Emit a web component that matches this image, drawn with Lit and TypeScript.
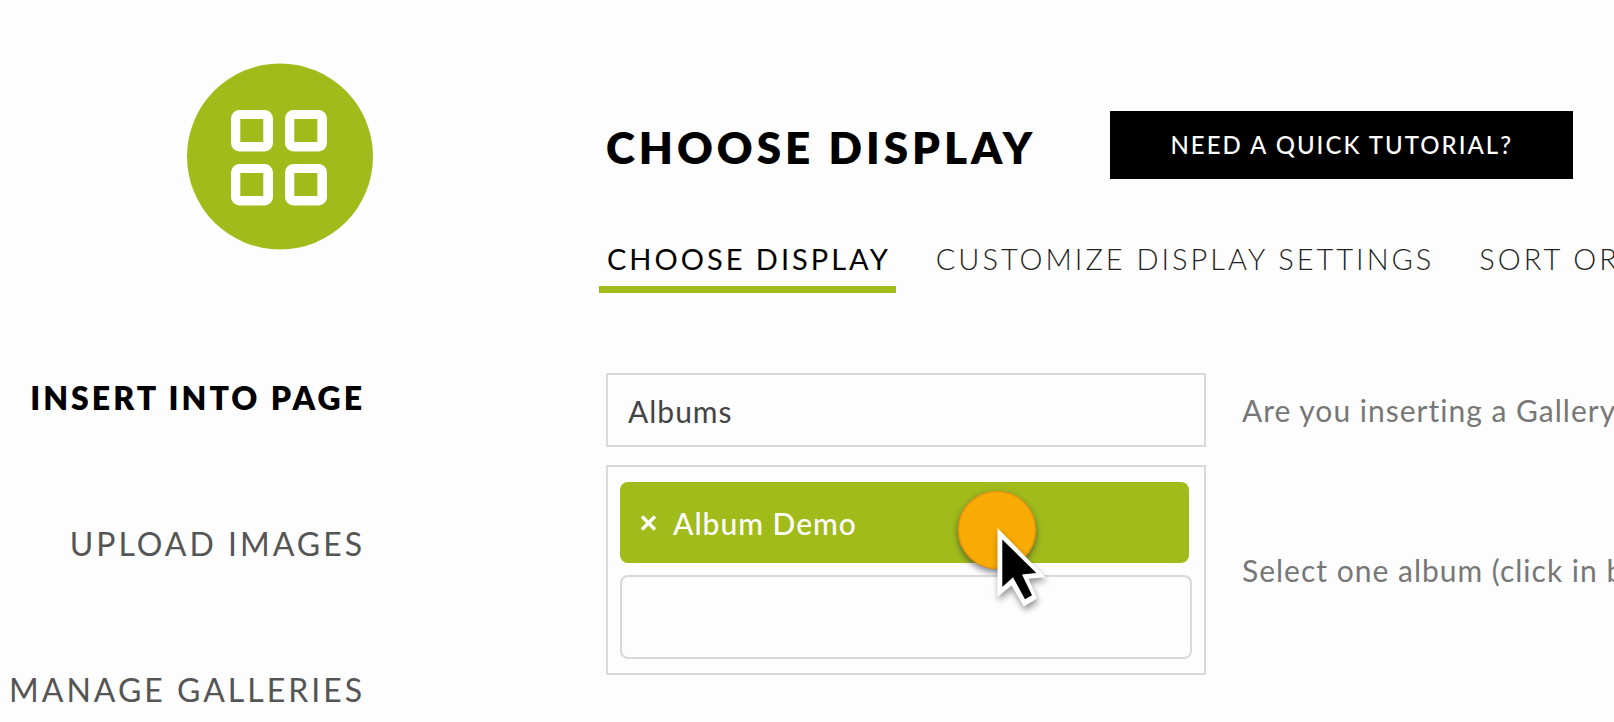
import { LitElement, html, css, svg } from "lit";
import { customElement, state } from "lit/decorators.js";

interface NavItem {
  label: string;
  current?: boolean;
}

@customElement("app-logo")
class AppLogo extends LitElement {
  static styles = css`
    :host { display: block; }
    svg { display: block; }
  `;

  render() {
    const tiles = [[44, 47], [98, 47], [44, 101], [98, 101]];
    return html`
      <svg width="186" height="187" viewBox="0 0 186 187" role="img" aria-label="Gallery">
        <circle cx="93" cy="93.5" r="93" fill="#a0bb1a"></circle>
        ${tiles.map(([x, y]) => svg`
          <rect x=${x} y=${y} width="42" height="41.5" rx="8.5" fill="#fff"></rect>
          <rect x=${x + 9.3} y=${y + 9} width="23" height="23" fill="#a0bb1a"></rect>
        `)}
      </svg>
    `;
  }
}

@customElement("click-pointer")
class ClickPointer extends LitElement {
  static styles = css`
    :host { display: block; pointer-events: none; }
    svg { display: block; overflow: visible; }
    .dot { filter: drop-shadow(0 3px 3px rgba(40, 40, 60, 0.6)); }
    .arrow { filter: drop-shadow(1px 4px 3px rgba(0, 0, 0, 0.4)); }
  `;

  render() {
    return html`
      <svg width="90" height="120" viewBox="0 0 90 120" aria-hidden="true">
        <circle class="dot" cx="40" cy="40" r="38.5" fill="#f8ab05" stroke="#e6960f" stroke-width="1.5"></circle>
        <g class="arrow">
          <path d="M40.5 38 L40.5 107 L54.5 95.5 L66.8 116.5 L80 108.5 L71.5 88.8 L88.5 87 Z" fill="#fff"></path>
          <path d="M45.3 49.5 L45.3 97 L56 87.2 L68 109.3 L75 105.3 L65 84.6 L79.3 83 Z" fill="#000"></path>
        </g>
      </svg>
    `;
  }
}

@customElement("app-root")
class AppRoot extends LitElement {
  @state() private tags: string[] = ["Album Demo"];

  private nav: NavItem[] = [
    { label: "INSERT INTO PAGE", current: true },
    { label: "UPLOAD IMAGES" },
    { label: "MANAGE GALLERIES" },
  ];

  private tabs: NavItem[] = [
    { label: "CHOOSE DISPLAY", current: true },
    { label: "CUSTOMIZE DISPLAY SETTINGS" },
    { label: "SORT OR" },
  ];

  static styles = css`
    :host {
      display: block;
      min-height: 100vh;
      overflow: hidden;
      background: #fdfdfd;
      color: #444;
      font-family: Lato, "Open Sans", sans-serif;
      font-size: 30px;
      line-height: 40px;
    }
    *, *::before, *::after { box-sizing: border-box; }
    a { color: inherit; text-decoration: none; white-space: nowrap; }
    .page {
      display: grid;
      grid-template-columns: 373px minmax(0, 1fr);
      column-gap: 226px;
      height: 100vh;
      overflow: hidden;
    }
    .side {
      display: flex;
      flex-direction: column;
      align-items: flex-end;
      gap: 128px;
      padding-top: 63px;
    }
    .menu {
      display: flex;
      flex-direction: column;
      align-items: flex-end;
      gap: 106px;
      padding-right: 8px;
      font-size: 32px;
      letter-spacing: 3px;
    }
    .menu a { color: #555; }
    .menu a.current { color: #000; font-weight: 800; }
    .main { min-width: 0; }
    .head {
      display: flex;
      align-items: center;
      padding: 111px 41px 0 7px;
    }
    h1 {
      flex: 1;
      margin: 0;
      padding-top: 4px;
      color: #000;
      font-size: 44px;
      font-weight: 800;
      line-height: 64px;
      letter-spacing: 4px;
      white-space: nowrap;
    }
    .tutorial {
      height: 68px;
      padding: 0 60px;
      border: 0;
      background: #000;
      color: #fff;
      font: 500 24px/32px Lato, sans-serif;
      letter-spacing: 2px;
      white-space: nowrap;
      cursor: pointer;
    }
    .tabs {
      display: flex;
      gap: 32px;
      padding-top: 59px;
      font-size: 29px;
      letter-spacing: 3px;
    }
    .tabs a {
      flex: none;
      padding: 0 5px 6px 8px;
      border-bottom: 7px solid transparent;
      line-height: 42px;
      color: #222;
      font-weight: 300;
    }
    .tabs a.current { border-color: #a0bb1a; color: #000; font-weight: 400; }
    .form {
      display: grid;
      grid-template-columns: minmax(0, 600px) minmax(0, 1fr);
      gap: 18px 36px;
      align-items: center;
      padding: 80px 0 0 7px;
      letter-spacing: 1px;
    }
    .hint { color: #777; white-space: nowrap; overflow: hidden; }
    select, input {
      display: block;
      width: 100%;
      margin: 0;
      border: 2px solid #d9d9d9;
      background: #fdfdfd;
      color: #444;
      font: inherit;
      letter-spacing: inherit;
      appearance: none;
      outline: none;
    }
    select { height: 74px; padding: 2px 20px 0; border-radius: 0; }
    .picker {
      position: relative;
      display: flex;
      flex-direction: column;
      gap: 12px;
      padding: 15px 12px 14px;
      border: 2px solid #d9d9d9;
    }
    .tag {
      display: flex;
      align-items: center;
      gap: 16px;
      height: 81px;
      margin-right: 3px;
      padding: 0 20px;
      border-radius: 8px;
      background: #a0bb1a;
      color: #fff;
      font-weight: 500;
    }
    .remove {
      display: block;
      padding: 0;
      border: 0;
      background: none;
      color: inherit;
      cursor: pointer;
    }
    .remove svg { display: block; }
    .picker input { height: 84px; padding: 0 20px; border-radius: 8px; }
    click-pointer { position: absolute; top: 23px; right: 157px; }
  `;

  private link(item: NavItem) {
    return html`<a href="#" class=${item.current ? "current" : ""}
      aria-current=${item.current ? "page" : "false"}>${item.label}</a>`;
  }

  render() {
    return html`
      <div class="page">
        <aside class="side">
          <app-logo></app-logo>
          <nav class="menu" aria-label="Sections">${this.nav.map((n) => this.link(n))}</nav>
        </aside>
        <main class="main">
          <header class="head">
            <h1>CHOOSE DISPLAY</h1>
            <button class="tutorial" type="button">NEED A QUICK TUTORIAL?</button>
          </header>
          <nav class="tabs" aria-label="Steps">${this.tabs.map((t) => this.link(t))}</nav>
          <form class="form">
            <select id="source"><option>Albums</option></select>
            <label class="hint" for="source">Are you inserting a Gallery</label>
            <div class="picker">
              ${this.tags.map((tag) => html`
                <div class="tag">
                  <button class="remove" type="button" aria-label="Remove"
                    @click=${() => { this.tags = this.tags.filter((t) => t !== tag); }}>
                    <svg width="17" height="16" viewBox="0 0 17 16">
                      <path d="M2 1.5 L15 14.5 M15 1.5 L2 14.5" stroke="#fff" stroke-width="3.4"></path>
                    </svg>
                  </button>
                  <span>${tag}</span>
                </div>
              `)}
              <input id="album" type="text" />
              <click-pointer></click-pointer>
            </div>
            <label class="hint" for="album">Select one album (click in b</label>
          </form>
        </main>
      </div>
    `;
  }
}
